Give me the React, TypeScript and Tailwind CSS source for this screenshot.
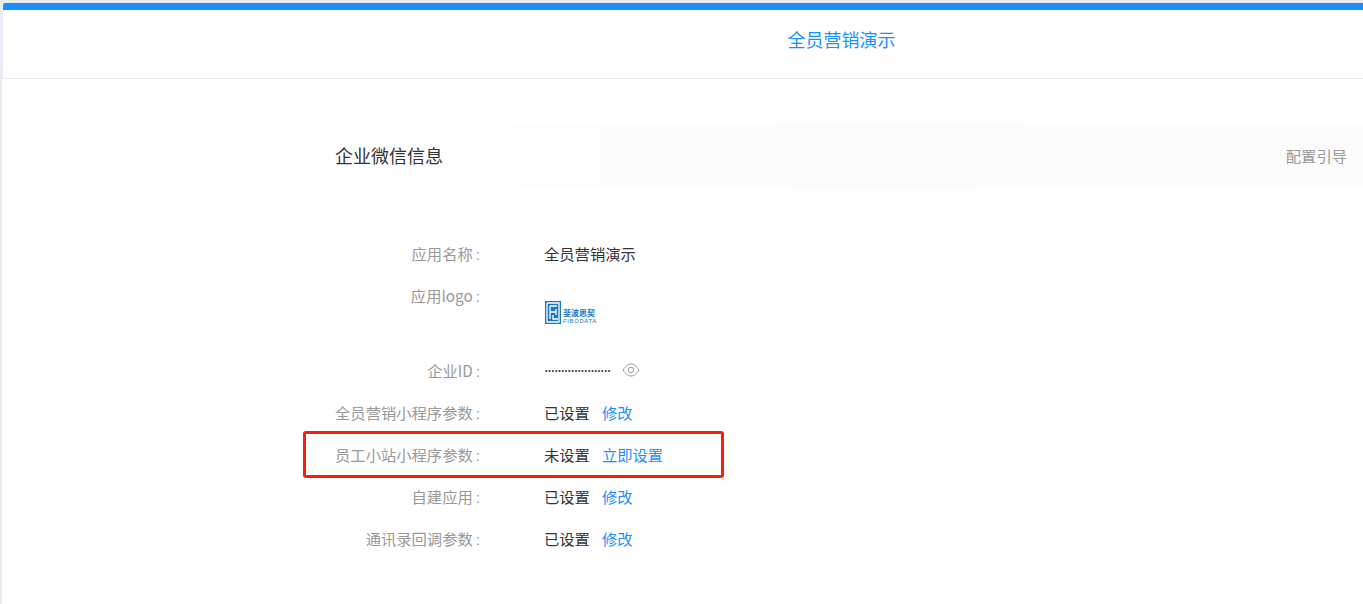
const rows = [
  { label: "全员营销小程序参数", status: "已设置", action: "修改" },
  { label: "员工小站小程序参数", status: "未设置", action: "立即设置", highlight: true },
  { label: "自建应用", status: "已设置", action: "修改" },
  { label: "通讯录回调参数", status: "已设置", action: "修改" },
];

function Label({ text }: { text: string }) {
  return (
    <div className="w-[185px] text-right text-[#999999]">
      {text}
      <span className="ml-[3px] font-['Liberation_Sans',sans-serif]">:</span>
    </div>
  );
}

function Logo() {
  return (
    <div className="flex items-center gap-[2px] h-[23px]">
      <svg width="16" height="23" viewBox="0 0 16 23" fill="none">
        <rect width="16" height="23" fill="#1b78c2" />
        <path d="M2 2H14V21H2V2M5 5H12M5 5V18M5 11H11M11 8V14M8 14V18H13" stroke="#fff" strokeWidth="1.3" />
      </svg>
      <div className="flex flex-col leading-none pt-[7px]">
        <span className="text-[8px] text-[#1b78c2] font-bold">斐波思契</span>
        <span className="text-[6px] text-[#1b78c2] mt-[1px] tracking-[0.6px] font-['Liberation_Sans',sans-serif]">FIBODATA</span>
      </div>
    </div>
  );
}

function Row({ label, status, action }: { label: string; status: string; action: string }) {
  return (
    <div className="flex items-center h-[42px]">
      <Label text={label} />
      <div className="ml-[64px] mb-[2px] text-[#333333]">{status}</div>
      <a className="ml-[12px] mb-[2px] text-[#1890ff]">{action}</a>
    </div>
  );
}

export default function App() {
  return (
    <main className="min-h-[604px] bg-[#e8ecf6] border-t-[3px] border-t-[#ececec] pl-[2px] overflow-hidden text-[15.3px] font-['Noto_Sans_CJK_SC','Noto_Sans',sans-serif]">
      <div className="bg-white min-h-[601px]">
        {/* top tab bar */}
        <header className="h-[76px] bg-[#e8ecf6] border-b border-b-[#e8e8e8]">
          <div className="ml-px h-full bg-white border-t-[7px] border-[#1890ff] rounded-tl-[2px] flex items-center justify-center pl-[317px] pb-[10px]">
            <span className="text-[18px] text-[#1890ff]">全员营销演示</span>
          </div>
        </header>

        <section className="pt-[44px] pl-[293px]">
          <div className="h-[66px] flex items-center justify-between pl-[40px] pr-[16px] bg-gradient-to-r from-white via-[#fbfbfc] to-[#fcfcfd]">
            <h2 className="text-[18px] text-[#333333] pb-[2px]">企业微信信息</h2>
            <a className="text-[#999999] pb-[2px]">配置引导</a>
          </div>

          <div className="pt-[44px]">
            <div className="flex items-center h-[42px]">
              <Label text="应用名称" />
              <div className="ml-[64px] mb-[2px] text-[#333333]">全员营销演示</div>
            </div>
            <div className="flex h-[75px]">
              <div className="pt-[9px]">
                <Label text="应用logo" />
              </div>
              <div className="ml-[65px] pt-[26px]">
                <Logo />
              </div>
            </div>
            <div className="flex items-center h-[42px]">
              <Label text="企业ID" />
              <div className="ml-[65px] text-[#333333] w-[67px] text-[7px] tracking-[0.85px] whitespace-nowrap font-['Liberation_Sans',sans-serif]">
                ••••••••••••••••••••
              </div>
              <svg className="ml-[10px] mb-[2px]" width="18" height="14" viewBox="0 0 18 14" fill="none" stroke="#999999" strokeWidth="1">
                <path d="M1 7C4 2.500 6.500 1 9 1C11.500 1 14 2.500 17 7C14 11.500 11.500 13 9 13C6.500 13 4 11.500 1 7Z" />
                <circle cx="9" cy="7" r="2.700" />
              </svg>
            </div>
            {rows.map((row) =>
              row.highlight ? (
                <div key={row.label} className="relative">
                  <Row label={row.label} status={row.status} action={row.action} />
                  <div className="absolute left-[8px] top-[-3px] w-[421px] h-[47px] border-[3px] border-[#ff1a0e] rounded-[3px]" />
                </div>
              ) : (
                <Row key={row.label} label={row.label} status={row.status} action={row.action} />
              ),
            )}
          </div>
        </section>
      </div>
    </main>
  );
}
